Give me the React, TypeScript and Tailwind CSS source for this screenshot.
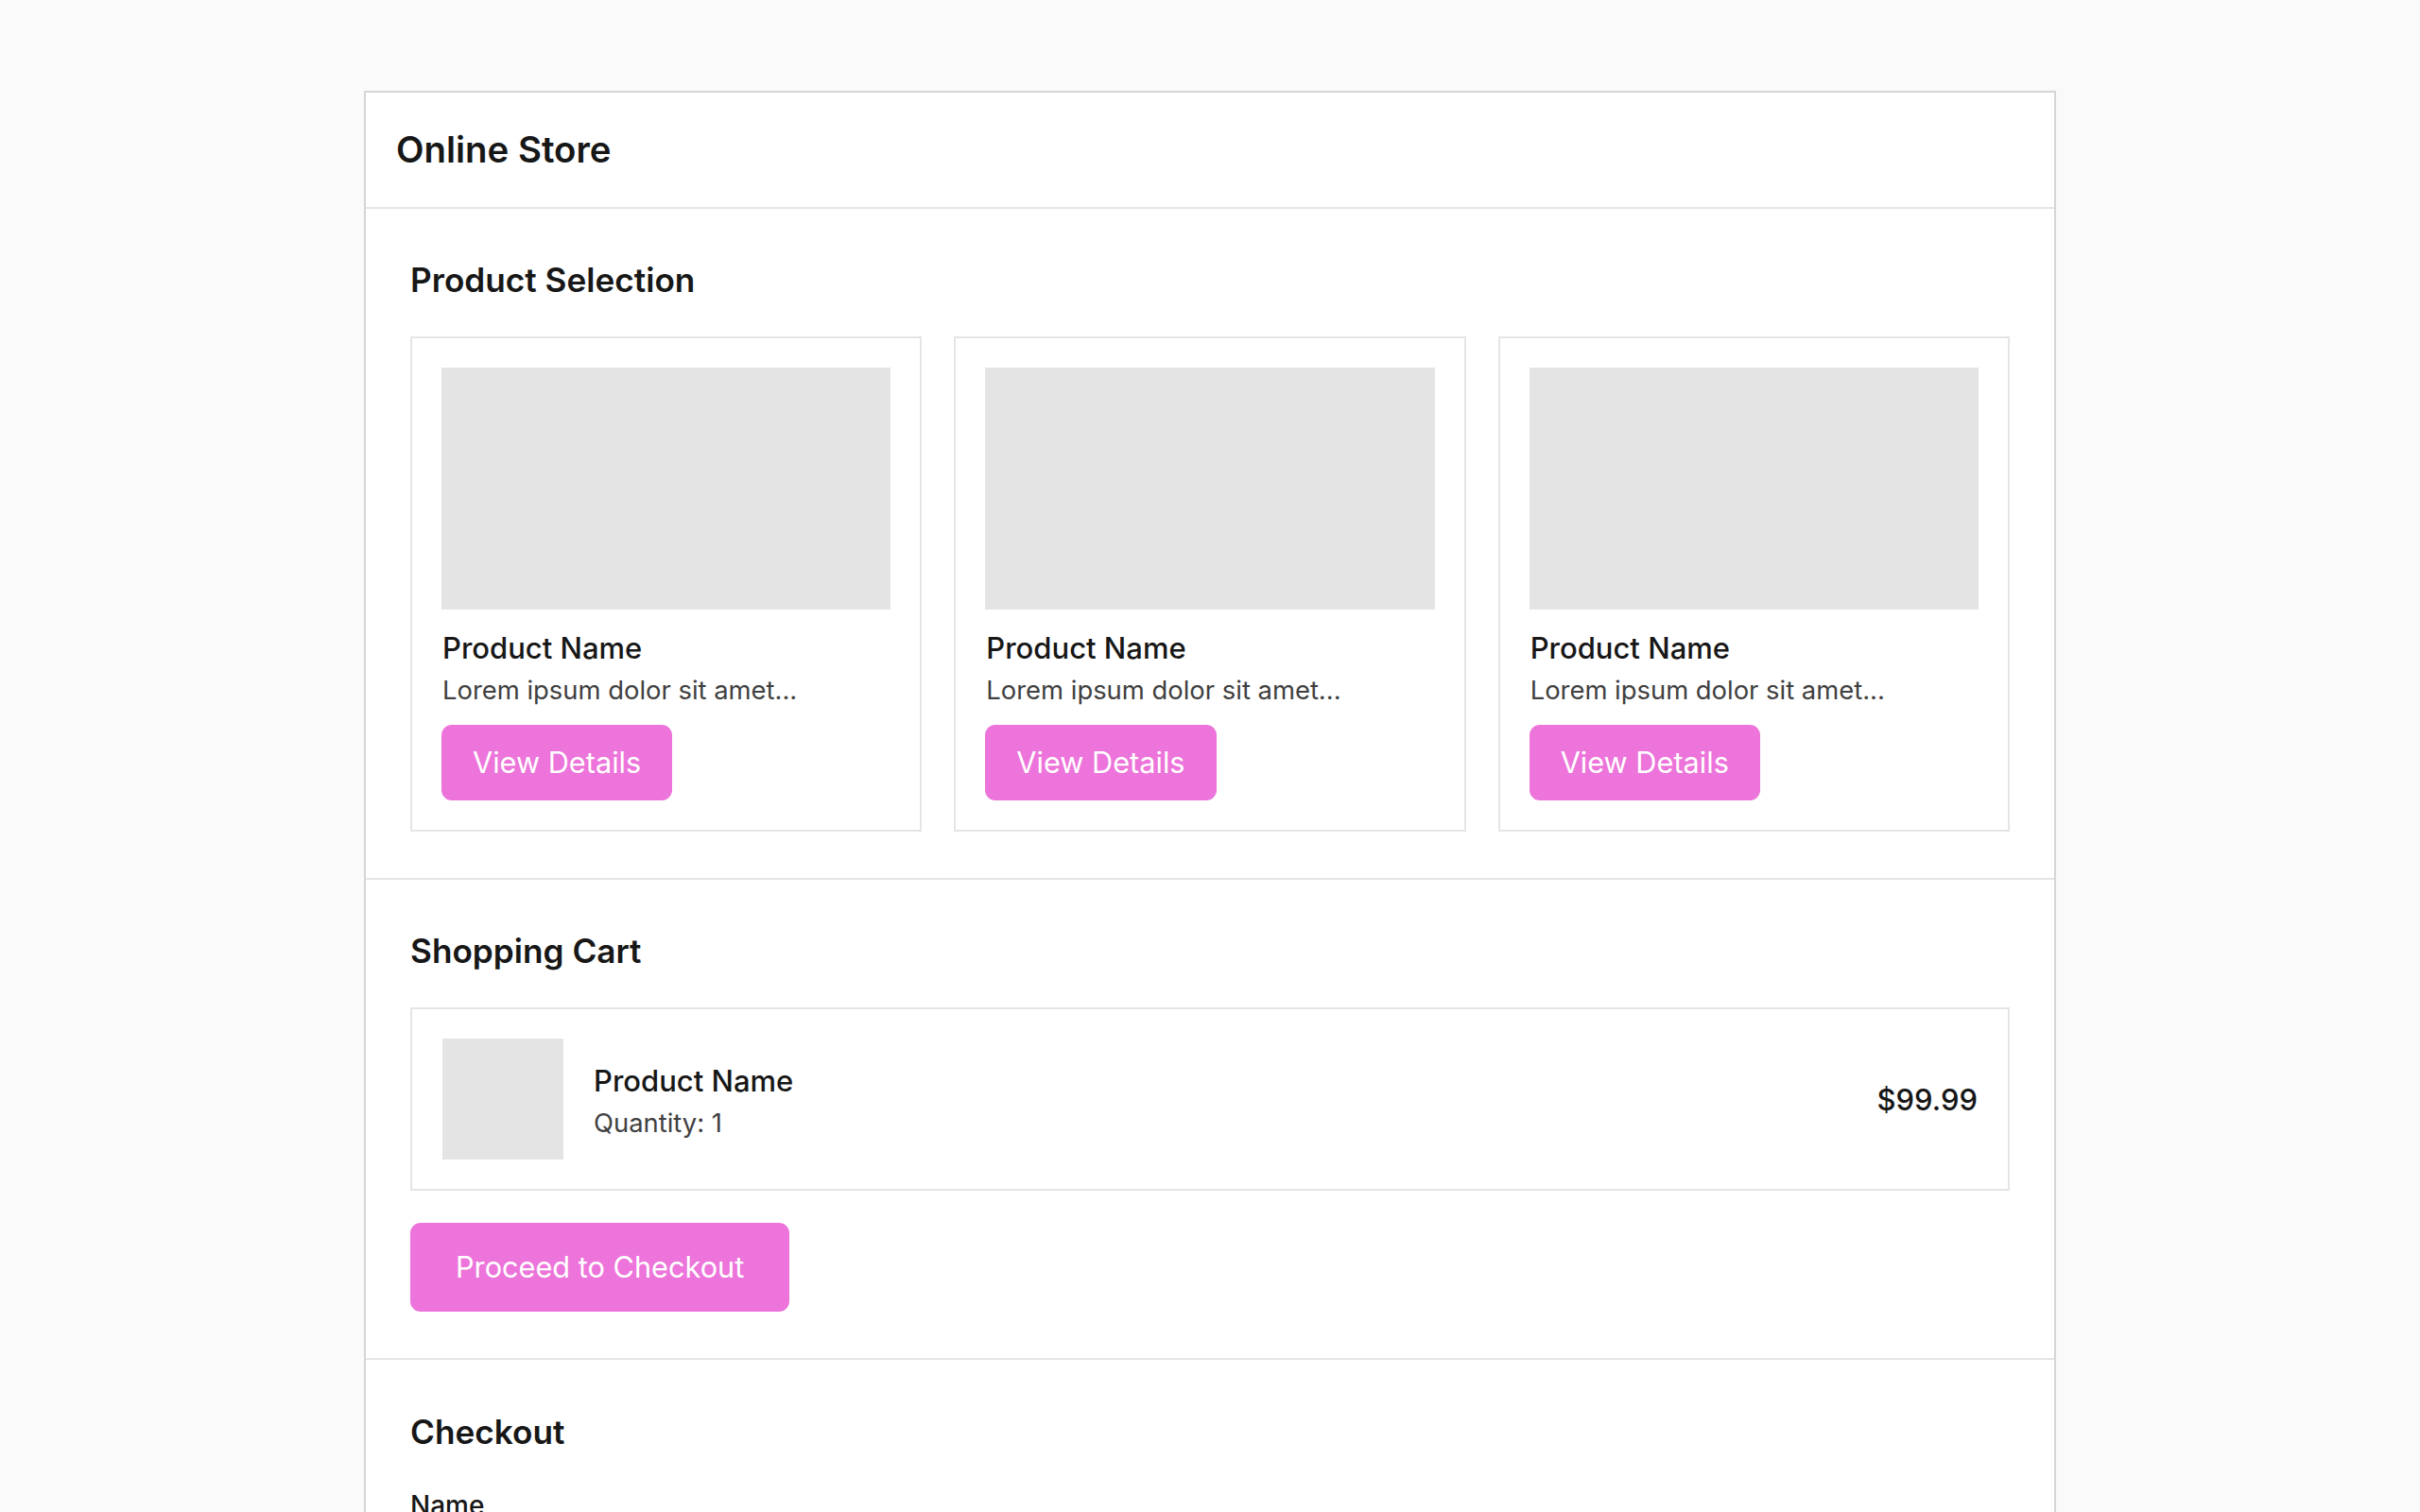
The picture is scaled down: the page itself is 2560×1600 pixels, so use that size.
import React from 'react';

const products = [
  { id: 1, name: 'Product Name', desc: 'Lorem ipsum dolor sit amet...' },
  { id: 2, name: 'Product Name', desc: 'Lorem ipsum dolor sit amet...' },
  { id: 3, name: 'Product Name', desc: 'Lorem ipsum dolor sit amet...' },
];

const ProductCard: React.FC<{ name: string; desc: string }> = ({ name, desc }) => (
  <div className="border-2 border-[#e5e5e5] p-[31px] flex flex-col items-start">
    <div className="w-full h-[256px] bg-[#e4e4e4]" />
    <h3 className="mt-[21px] pl-[1px] text-[31px] leading-[40px] font-medium text-[#171717]">{name}</h3>
    <p className="mt-[4px] pl-[1px] text-[27.4px] leading-[40px] text-[#404040]">{desc}</p>
    <button className="mt-[17px] h-[80px] px-[33px] rounded-[11px] bg-[#ec74da] text-white text-[30.7px] leading-[44px]">
      View Details
    </button>
  </div>
);

const SectionTitle: React.FC<{ children: React.ReactNode }> = ({ children }) => (
  <h2 className="text-[35.2px] leading-[44px] font-semibold text-[#171717]">{children}</h2>
);

const App: React.FC = () => {
  return (
    <div className="min-h-screen bg-[#fafafa] pt-[96px] pb-[96px] font-['Inter',sans-serif]">
      <div className="w-[1790px] mx-auto bg-white border-2 border-[#d6d6d6]">
        <header className="px-[32px] py-[32px]">
          <h1 className="text-[38.4px] leading-[57px] font-semibold text-[#171717]">Online Store</h1>
        </header>

        <section className="border-t-2 border-[#e5e5e5] px-[47px] pt-[53px] pb-[49px]">
          <SectionTitle>Product Selection</SectionTitle>
          <div className="mt-[38px] grid grid-cols-3 gap-[34px]">
            {products.map((p) => (
              <ProductCard key={p.id} name={p.name} desc={p.desc} />
            ))}
          </div>
        </section>

        <section className="border-t-2 border-[#e5e5e5] px-[47px] pt-[53px] pb-[49px]">
          <SectionTitle>Shopping Cart</SectionTitle>
          <div className="mt-[38px] border-2 border-[#e5e5e5] px-[32px] py-[31px] flex items-center">
            <div className="w-[128px] h-[128px] bg-[#e4e4e4] shrink-0" />
            <div className="ml-[32px] flex-1 pt-[6px]">
              <div className="text-[31px] leading-[40px] font-medium text-[#171717]">Product Name</div>
              <div className="mt-[4px] text-[27.4px] leading-[40px] text-[#404040]">Quantity: 1</div>
            </div>
            <div className="text-[31px] leading-[40px] font-medium text-[#171717] pt-[2px]">$99.99</div>
          </div>
          <button className="mt-[34px] px-[48px] py-[25px] rounded-[11px] bg-[#ec74da] text-white text-[30.7px] leading-[44px]">
            Proceed to Checkout
          </button>
        </section>

        <section className="border-t-2 border-[#e5e5e5] px-[47px] pt-[54px] pb-[50px]">
          <SectionTitle>Checkout</SectionTitle>
          <form className="mt-[36px] flex flex-col gap-[32px]" onSubmit={(e) => e.preventDefault()}>
            {['Name', 'Email', 'Address'].map((label) => (
              <label key={label} className="flex flex-col gap-[12px]">
                <span className="text-[28px] leading-[40px] font-medium text-[#171717]">{label}</span>
                <input className="h-[72px] border-2 border-[#e5e5e5] rounded-[8px] px-[20px] text-[28px] outline-none" />
              </label>
            ))}
            <button className="self-start px-[48px] py-[25px] rounded-[11px] bg-[#ec74da] text-white text-[30.7px] leading-[44px]">
              Place Order
            </button>
          </form>
        </section>
      </div>
    </div>
  );
};

export default App;
